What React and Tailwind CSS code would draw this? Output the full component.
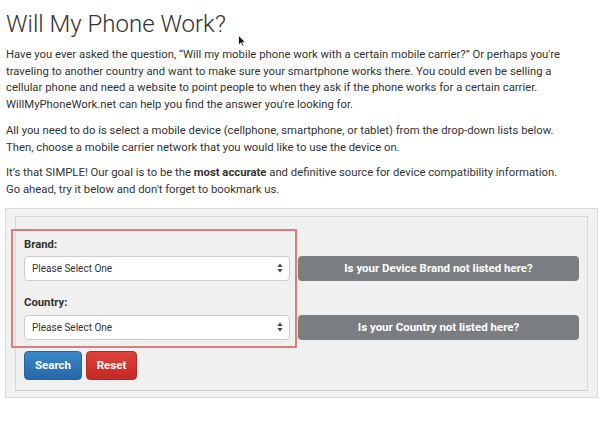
const SelectBox = () => (
  <div className="flex h-[25px] items-center justify-between rounded-[4px] border border-[#cccccc] bg-white pl-[7px] pr-[6px] text-[10px] text-[#333]">
    <span>Please Select One</span>
    <svg width="6" height="10" viewBox="0 0 6 10" className="text-[#444]">
      <path d="M3 0.5 L5.6 4 H0.4 Z" fill="currentColor" />
      <path d="M3 9.5 L5.6 6 H0.4 Z" fill="currentColor" />
    </svg>
  </div>
)

const GrayButton = ({ children }) => (
  <div className="flex h-[25px] items-center justify-center rounded-[4px] bg-[#7b7e80] text-[11.5px] font-bold text-white">
    {children}
  </div>
)

export default function App() {
  return (
    <div className="relative h-[423px] w-[610px] overflow-hidden bg-white font-['Roboto','Liberation_Sans',sans-serif] text-[#333]">
      <div className="px-[6px] pt-[10px]">
        <h1 className="text-[24px] font-light leading-[28px] text-[#333]">Will My Phone Work?</h1>

        <div className="mt-[9px] space-y-[9px] text-[11.3px] leading-[16.7px]">
          <p>
            Have you ever asked the question, “Will my mobile phone work with a certain mobile carrier?” Or perhaps you're<br />
            traveling to another country and want to make sure your smartphone works there. You could even be selling a<br />
            cellular phone and need a website to point people to when they ask if the phone works for a certain carrier.<br />
            WillMyPhoneWork.net can help you find the answer you're looking for.
          </p>
          <p>
            All you need to do is select a mobile device (cellphone, smartphone, or tablet) from the drop-down lists below.<br />
            Then, choose a mobile carrier network that you would like to use the device on.
          </p>
          <p>
            It’s that SIMPLE! Our goal is to be the <b>most accurate</b> and definitive source for device compatibility information.<br />
            Go ahead, try it below and don't forget to bookmark us.
          </p>
        </div>
      </div>

      <div className="mx-[5px] mt-[9px] h-[190px] w-[593px] border border-[#dcdcd6] bg-[#f1f1f1] pl-[9px] pr-[9px] pt-[7px]">
        <div className="h-[175px] border border-[#d8d8d2] border-b-[#cfcfc9] bg-[#f0f0f0] px-[8px] pt-[21px]">
          <div className="relative">
            <div className="grid grid-cols-[266px_1fr] gap-x-[8px]">
              <div>
                <div className="text-[11.3px] font-bold leading-[14px]">Brand:</div>
                <div className="mt-[4px]"><SelectBox /></div>
              </div>
              <div className="flex flex-col justify-end">
                <GrayButton>Is your Device Brand not listed here?</GrayButton>
              </div>
              <div className="mt-[15px]">
                <div className="text-[11.3px] font-bold leading-[14px]">Country:</div>
                <div className="mt-[5px]"><SelectBox /></div>
              </div>
              <div className="flex flex-col justify-end">
                <GrayButton>Is your Country not listed here?</GrayButton>
              </div>
            </div>

            <div className="mt-[11px] flex gap-[4px]">
              <button className="h-[29px] w-[58px] rounded-[4px] border border-[#2a6496] bg-gradient-to-b from-[#3a87c8] to-[#2667a8] text-[11.5px] font-bold text-white">
                Search
              </button>
              <button className="h-[29px] w-[51px] rounded-[4px] border border-[#b02a26] bg-gradient-to-b from-[#e0413b] to-[#c32924] text-[11.5px] font-bold text-white">
                Reset
              </button>
            </div>

            <div className="pointer-events-none absolute left-[-13px] top-[-9px] h-[119px] w-[286px] border-2 border-[#e07b7b]" />
          </div>
        </div>
      </div>

      <svg className="absolute left-[238px] top-[35px]" width="8" height="12" viewBox="0 0 8 12">
        <path d="M0.5 0.5 V10 L3 7.8 L4.6 11.3 L6 10.7 L4.5 7.3 H7.5 Z" fill="#111" stroke="#fff" strokeWidth="0.8" />
      </svg>
    </div>
  )
}
